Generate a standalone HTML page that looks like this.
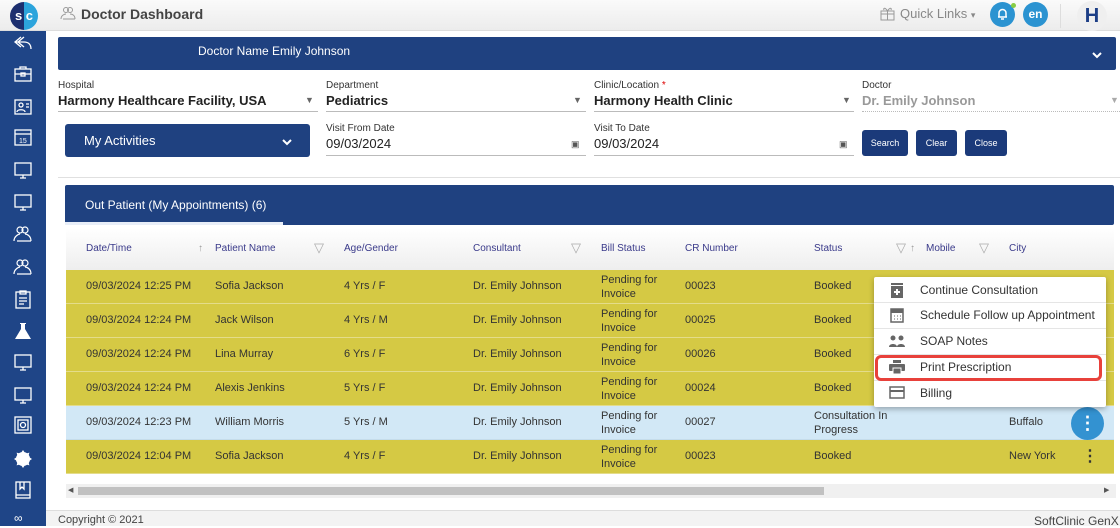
<!DOCTYPE html>
<html><head><meta charset="utf-8"><style>
*{box-sizing:border-box;margin:0;padding:0}
body{width:1120px;height:526px;overflow:hidden;font-family:"Liberation Sans",sans-serif;background:#fff;position:relative;color:#222}
.abs{position:absolute}
.top{left:0;top:0;width:1120px;height:31px;background:linear-gradient(#fafafa,#ececec);border-bottom:1px solid #ddd}
.side{left:0;top:31px;width:46px;height:495px;background:#1f4587}
.side svg{position:absolute;left:13px}
.lbl{font-size:10px;color:#333}
.val{font-size:13px;font-weight:bold;color:#222}
.btn{background:#1b3a7a;color:#fff;font-size:9px;border-radius:3px;text-align:center;line-height:26px;height:26px}
.th{font-size:10px;color:#3a3a8a}
.row{left:66px;width:1048px;height:34px;background:#d5c944;border-bottom:1px solid #e4dc8a}
.c{position:absolute;font-size:11px;color:#333}
.menu{left:874px;top:277px;width:232px;height:130px;background:#fff;box-shadow:0 2px 6px rgba(0,0,0,.3);border-radius:2px}
.mi{position:absolute;left:46px;font-size:12px;color:#333}
.ml{position:absolute;left:0;width:232px;height:1px;background:#e5e5e5}
</style></head><body>
<div class="abs top"></div>
<div class="abs" style="left:10px;top:2px;width:28px;height:28px;border-radius:50%;background:linear-gradient(90deg,#1d2f6f 50%,#2ca4dc 50%);color:#fff;font-weight:bold;font-size:13px;line-height:28px;text-align:center">s c</div>
<svg class="abs" style="left:60px;top:6px" width="16" height="14" viewBox="0 0 16 14" fill="none" stroke="#999" stroke-width="1"><circle cx="6" cy="4" r="2.5"/><circle cx="10" cy="4" r="2.5"/><path d="M1 13c0-4 4-5 5-5M15 13c0-4-3-5-5-5M3 13h12"/></svg>
<div class="abs" style="left:81px;top:6px;font-size:14px;font-weight:bold;color:#444">Doctor Dashboard</div>
<svg class="abs" style="left:880px;top:6px" width="15" height="15" viewBox="0 0 15 15" fill="none" stroke="#999" stroke-width="1"><rect x="1" y="5" width="13" height="9"/><path d="M1 8h13M7.5 5v9M7.5 5C5 1 3 2 4 4M7.5 5C10 1 12 2 11 4"/></svg>
<div class="abs" style="left:900px;top:6px;font-size:13px;color:#888">Quick Links <span style="font-size:9px">▾</span></div>
<div class="abs" style="left:990px;top:2px;width:25px;height:25px;border-radius:50%;background:#2b93d1"></div>
<svg class="abs" style="left:996px;top:7px" width="13" height="14" viewBox="0 0 13 14" fill="none" stroke="#fff" stroke-width="1.5"><path d="M2 10h9M3 10V6a3.5 3.5 0 017 0v4M5 12h3"/></svg>
<div class="abs" style="left:1011px;top:3px;width:5px;height:5px;border-radius:50%;background:#8c4"></div>
<div class="abs" style="left:1023px;top:2px;width:25px;height:25px;border-radius:50%;background:#2b93d1;color:#fff;text-align:center;line-height:25px;font-size:12px;font-weight:bold">en</div>
<div class="abs" style="left:1060px;top:4px;width:1px;height:24px;background:#ddd"></div>
<div class="abs" style="left:1077px;top:1px;width:30px;height:30px;border-radius:50%;background:#efefef;color:#1c3e86;text-align:center;line-height:30px;font-size:20px;font-weight:bold">H</div>
<div class="abs side">
<svg style="top:4px" width="20" height="16" viewBox="0 0 20 16" fill="none" stroke="#fff" stroke-width="1.3"><path d="M8 2L2 7l6 5M2 7h9c4 0 7 2 7 7"/><path d="M11 2L5 7l6 5"/></svg>
<svg style="top:35px" width="20" height="16" viewBox="0 0 20 16" fill="none" stroke="#fff" stroke-width="1.3"><rect x="2" y="3" width="16" height="12"/><path d="M7 3V1h6v2M2 8h16"/><rect x="8" y="7" width="4" height="3"/></svg>
<svg style="top:66px" width="20" height="18" viewBox="0 0 20 18" fill="none" stroke="#fff" stroke-width="1.3"><rect x="2" y="3" width="16" height="14"/><circle cx="8" cy="8" r="2"/><path d="M4 15c0-3 8-3 8 0M13 7h3M13 10h3"/></svg>
<svg style="top:97px" width="20" height="18" viewBox="0 0 20 18" fill="none" stroke="#fff" stroke-width="1.3"><rect x="2" y="2" width="16" height="15"/><path d="M2 6h16"/><text x="6" y="15" font-size="7" fill="#fff" stroke="none">15</text></svg>
<svg style="top:130px" width="20" height="18" viewBox="0 0 20 18" fill="none" stroke="#fff" stroke-width="1.3"><rect x="2" y="2" width="16" height="12"/><path d="M10 14v3M7 17h6"/></svg>
<svg style="top:162px" width="20" height="18" viewBox="0 0 20 18" fill="none" stroke="#fff" stroke-width="1.3"><rect x="2" y="2" width="16" height="12"/><path d="M10 14v3M7 17h6"/></svg>
<svg style="top:194px" width="20" height="18" viewBox="0 0 20 18" fill="none" stroke="#fff" stroke-width="1.2"><circle cx="7" cy="5" r="3"/><circle cx="12" cy="5" r="3"/><path d="M1 16c0-5 5-7 6-7M18 16c0-5-4-7-6-7M4 16h14"/></svg>
<svg style="top:227px" width="20" height="18" viewBox="0 0 20 18" fill="none" stroke="#fff" stroke-width="1.2"><circle cx="7" cy="5" r="3"/><circle cx="12" cy="5" r="3"/><path d="M1 16c0-5 5-7 6-7M18 16c0-5-4-7-6-7M4 16h14"/></svg>
<svg style="top:258px" width="20" height="20" viewBox="0 0 20 20" fill="none" stroke="#fff" stroke-width="1.3"><rect x="3" y="3" width="14" height="16"/><path d="M7 2h6v3H7zM6 9h8M6 12h8M6 15h5"/></svg>
<svg style="top:290px" width="20" height="20" viewBox="0 0 20 20" fill="#fff"><path d="M7 2h6v1h-1v5l6 10H2L8 8V3H7z"/></svg>
<svg style="top:322px" width="20" height="18" viewBox="0 0 20 18" fill="none" stroke="#fff" stroke-width="1.3"><rect x="2" y="2" width="16" height="12"/><path d="M10 14v3M7 17h6"/></svg>
<svg style="top:355px" width="20" height="18" viewBox="0 0 20 18" fill="none" stroke="#fff" stroke-width="1.3"><rect x="2" y="2" width="16" height="12"/><path d="M10 14v3M7 17h6"/></svg>
<svg style="top:385px" width="20" height="18" viewBox="0 0 20 18" fill="none" stroke="#fff" stroke-width="1.3"><rect x="2" y="1" width="16" height="16"/><rect x="5" y="4" width="10" height="10"/><circle cx="10" cy="9" r="2.5"/></svg>
<svg style="top:418px" width="20" height="20" viewBox="0 0 20 20" fill="#fff"><circle cx="10" cy="10" r="7"/><path d="M10 1l2 3h-4zM10 19l2-3h-4zM1 10l3 2v-4zM19 10l-3 2v-4zM3.6 3.6l3.5 1-2.5 2.5zM16.4 16.4l-3.5-1 2.5-2.5zM16.4 3.6l-1 3.5-2.5-2.5zM3.6 16.4l1-3.5 2.5 2.5z"/></svg>
<svg style="top:450px" width="20" height="18" viewBox="0 0 20 18" fill="none" stroke="#fff" stroke-width="1.3"><rect x="3" y="1" width="14" height="16"/><path d="M3 14h14M7 1v7l2-2 2 2V1"/></svg>
<div class="abs" style="left:14px;top:480px;color:#fff;font-size:12px">∞</div>
</div>
<div class="abs" style="left:58px;top:37px;width:1058px;height:33px;background:#1f4180;border-radius:2px"></div>
<div class="abs" style="left:198px;top:44px;color:#fff;font-size:12px">Doctor Name Emily Johnson</div>
<svg class="abs" style="left:1092px;top:52px" width="10" height="7" viewBox="0 0 10 7" fill="none" stroke="#fff" stroke-width="2"><path d="M1 1l4 4 4-4"/></svg>

<div class="abs lbl" style="left:58px;top:80px">Hospital</div>
<div class="abs val" style="left:58px;top:93px">Harmony Healthcare Facility, USA</div>
<div class="abs" style="left:305px;top:95px;font-size:9px;color:#666">▼</div>
<div class="abs" style="left:58px;top:111px;width:260px;height:1px;background:#bbb"></div>
<div class="abs lbl" style="left:326px;top:80px">Department</div>
<div class="abs val" style="left:326px;top:93px">Pediatrics</div>
<div class="abs" style="left:573px;top:95px;font-size:9px;color:#666">▼</div>
<div class="abs" style="left:326px;top:111px;width:260px;height:1px;background:#bbb"></div>
<div class="abs lbl" style="left:594px;top:80px">Clinic/Location <span style="color:#d00">*</span></div>
<div class="abs val" style="left:594px;top:93px">Harmony Health Clinic</div>
<div class="abs" style="left:842px;top:95px;font-size:9px;color:#666">▼</div>
<div class="abs" style="left:594px;top:111px;width:260px;height:1px;background:#bbb"></div>
<div class="abs lbl" style="left:862px;top:80px">Doctor</div>
<div class="abs val" style="left:862px;top:93px;color:#999">Dr. Emily Johnson</div>
<div class="abs" style="left:1110px;top:95px;font-size:9px;color:#aaa">▼</div>
<div class="abs" style="left:862px;top:111px;width:258px;border-top:1px dotted #bbb"></div>

<div class="abs" style="left:65px;top:124px;width:245px;height:33px;background:#1f4180;border-radius:3px"></div>
<div class="abs" style="left:84px;top:133px;color:#fff;font-size:13px">My Activities</div>
<svg class="abs" style="left:282px;top:139px" width="10" height="7" viewBox="0 0 10 7" fill="none" stroke="#fff" stroke-width="2"><path d="M1 1l4 4 4-4"/></svg>
<div class="abs lbl" style="left:326px;top:123px">Visit From Date</div>
<div class="abs" style="left:326px;top:136px;font-size:13px;color:#222">09/03/2024</div>
<div class="abs" style="left:571px;top:139px;font-size:9px;color:#555">▣</div>
<div class="abs" style="left:326px;top:155px;width:260px;height:1px;background:#bbb"></div>
<div class="abs lbl" style="left:594px;top:123px">Visit To Date</div>
<div class="abs" style="left:594px;top:136px;font-size:13px;color:#222">09/03/2024</div>
<div class="abs" style="left:839px;top:139px;font-size:9px;color:#555">▣</div>
<div class="abs" style="left:594px;top:155px;width:260px;height:1px;background:#bbb"></div>
<div class="abs btn" style="left:862px;top:130px;width:46px">Search</div>
<div class="abs btn" style="left:916px;top:130px;width:41px">Clear</div>
<div class="abs btn" style="left:965px;top:130px;width:42px">Close</div>
<div class="abs" style="left:58px;top:177px;width:1062px;height:1px;background:#e0e0e0"></div>

<div class="abs" style="left:65px;top:185px;width:1049px;height:40px;background:#1f4180;border-radius:2px"></div>
<div class="abs" style="left:85px;top:198px;color:#fff;font-size:12px">Out Patient (My Appointments) (6)</div>
<div class="abs" style="left:65px;top:222px;width:218px;height:3px;background:#e8eef8"></div>
<div class="abs" style="left:66px;top:228px;width:1048px;height:42px;background:linear-gradient(#fff,#eee)"></div>
<div class="abs th" style="left:86px;top:243px">Date/Time</div>
<div class="abs th" style="left:198px;top:243px;color:#999">↑</div>
<div class="abs th" style="left:215px;top:243px">Patient Name</div>
<div class="abs th" style="left:314px;top:240px;color:#aaa;font-size:13px">▽</div>
<div class="abs th" style="left:344px;top:243px">Age/Gender</div>
<div class="abs th" style="left:473px;top:243px">Consultant</div>
<div class="abs th" style="left:571px;top:240px;color:#aaa;font-size:13px">▽</div>
<div class="abs th" style="left:601px;top:243px">Bill Status</div>
<div class="abs th" style="left:685px;top:243px">CR Number</div>
<div class="abs th" style="left:814px;top:243px">Status</div>
<div class="abs th" style="left:896px;top:240px;color:#aaa;font-size:13px">▽</div>
<div class="abs th" style="left:910px;top:243px;color:#999">↑</div>
<div class="abs th" style="left:926px;top:243px">Mobile</div>
<div class="abs th" style="left:979px;top:240px;color:#aaa;font-size:13px">▽</div>
<div class="abs th" style="left:1009px;top:243px">City</div>

<div class="abs row" style="top:270px"><span class="c" style="left:20px;top:10px">09/03/2024 12:25 PM</span><span class="c" style="left:149px;top:10px">Sofia Jackson</span><span class="c" style="left:278px;top:10px">4 Yrs / F</span><span class="c" style="left:407px;top:10px">Dr. Emily Johnson</span><span class="c" style="left:535px;top:3px;line-height:14px">Pending for<br>Invoice</span><span class="c" style="left:619px;top:10px">00023</span><span class="c" style="left:748px;top:10px">Booked</span></div>
<div class="abs row" style="top:304px"><span class="c" style="left:20px;top:10px">09/03/2024 12:24 PM</span><span class="c" style="left:149px;top:10px">Jack Wilson</span><span class="c" style="left:278px;top:10px">4 Yrs / M</span><span class="c" style="left:407px;top:10px">Dr. Emily Johnson</span><span class="c" style="left:535px;top:3px;line-height:14px">Pending for<br>Invoice</span><span class="c" style="left:619px;top:10px">00025</span><span class="c" style="left:748px;top:10px">Booked</span></div>
<div class="abs row" style="top:338px"><span class="c" style="left:20px;top:10px">09/03/2024 12:24 PM</span><span class="c" style="left:149px;top:10px">Lina Murray</span><span class="c" style="left:278px;top:10px">6 Yrs / F</span><span class="c" style="left:407px;top:10px">Dr. Emily Johnson</span><span class="c" style="left:535px;top:3px;line-height:14px">Pending for<br>Invoice</span><span class="c" style="left:619px;top:10px">00026</span><span class="c" style="left:748px;top:10px">Booked</span></div>
<div class="abs row" style="top:372px"><span class="c" style="left:20px;top:10px">09/03/2024 12:24 PM</span><span class="c" style="left:149px;top:10px">Alexis Jenkins</span><span class="c" style="left:278px;top:10px">5 Yrs / F</span><span class="c" style="left:407px;top:10px">Dr. Emily Johnson</span><span class="c" style="left:535px;top:3px;line-height:14px">Pending for<br>Invoice</span><span class="c" style="left:619px;top:10px">00024</span><span class="c" style="left:748px;top:10px">Booked</span></div>
<div class="abs row" style="top:406px;background:#d2e8f6;border-color:#c5dcea"><span class="c" style="left:20px;top:10px">09/03/2024 12:23 PM</span><span class="c" style="left:149px;top:10px">William Morris</span><span class="c" style="left:278px;top:10px">5 Yrs / M</span><span class="c" style="left:407px;top:10px">Dr. Emily Johnson</span><span class="c" style="left:535px;top:3px;line-height:14px">Pending for<br>Invoice</span><span class="c" style="left:619px;top:10px">00027</span><span class="c" style="left:748px;top:3px;line-height:14px">Consultation In<br>Progress</span><span class="c" style="left:943px;top:10px">Buffalo</span></div>
<div class="abs row" style="top:440px"><span class="c" style="left:20px;top:10px">09/03/2024 12:04 PM</span><span class="c" style="left:149px;top:10px">Sofia Jackson</span><span class="c" style="left:278px;top:10px">4 Yrs / F</span><span class="c" style="left:407px;top:10px">Dr. Emily Johnson</span><span class="c" style="left:535px;top:3px;line-height:14px">Pending for<br>Invoice</span><span class="c" style="left:619px;top:10px">00023</span><span class="c" style="left:748px;top:10px">Booked</span><span class="c" style="left:943px;top:10px">New York</span><span class="c" style="left:1016px;top:6px;font-size:16px;font-weight:bold;line-height:22px">⋮</span></div>
<div class="abs" style="left:1071px;top:407px;width:33px;height:33px;border-radius:50%;background:#3392d1;color:#fff;text-align:center;line-height:33px;font-size:18px;font-weight:bold">⋮</div>

<div class="abs" style="left:66px;top:484px;width:1050px;height:14px;background:#f0f0f0"></div>
<div class="abs" style="left:78px;top:487px;width:746px;height:8px;background:#c1c1c1"></div>
<div class="abs" style="left:68px;top:486px;font-size:7px;color:#555">◀</div>
<div class="abs" style="left:1104px;top:486px;font-size:7px;color:#555">▶</div>
<div class="abs" style="left:46px;top:510px;width:1074px;height:16px;background:#f3f3f3;border-top:1px solid #ddd"></div>
<div class="abs" style="left:58px;top:514px;font-size:11px;color:#444">Copyright © 2021</div>
<div class="abs" style="left:1034px;top:514px;font-size:12px;color:#444">SoftClinic GenX</div>

<div class="abs menu">
<div class="ml" style="top:25px"></div><div class="ml" style="top:51px"></div><div class="ml" style="top:77px"></div><div class="ml" style="top:103px"></div>
<svg class="abs" style="left:16px;top:6px" width="14" height="15" viewBox="0 0 14 15"><rect x="1" y="0" width="12" height="2" fill="#666"/><rect x="1" y="3" width="12" height="12" fill="#666"/><path d="M7 6v6M4 9h6" stroke="#fff" stroke-width="2"/></svg>
<span class="mi" style="top:6px">Continue Consultation</span>
<svg class="abs" style="left:16px;top:31px" width="14" height="15" viewBox="0 0 14 15"><rect x="1" y="1" width="12" height="13" fill="none" stroke="#666" stroke-width="1.5"/><rect x="1" y="1" width="12" height="4" fill="#666"/><path d="M4 8h1M7 8h1M10 8h1M4 11h1M7 11h1M10 11h1" stroke="#666"/></svg>
<span class="mi" style="top:31px">Schedule Follow up Appointment</span>
<svg class="abs" style="left:15px;top:58px" width="16" height="12" viewBox="0 0 16 12" fill="#666"><circle cx="4" cy="3" r="2.5"/><circle cx="12" cy="3" r="2.5"/><path d="M0 12c0-4 8-4 8 0zM8 12c0-4 8-4 8 0z"/></svg>
<span class="mi" style="top:57px">SOAP Notes</span>
<svg class="abs" style="left:15px;top:83px" width="16" height="14" viewBox="0 0 16 14" fill="#666"><rect x="4" y="0" width="8" height="3"/><rect x="0" y="4" width="16" height="7" rx="1"/><rect x="4" y="8" width="8" height="6" fill="#666" stroke="#fff"/></svg>
<span class="mi" style="top:83px">Print Prescription</span>
<svg class="abs" style="left:15px;top:109px" width="16" height="13" viewBox="0 0 16 13"><rect x="1" y="1" width="14" height="11" fill="none" stroke="#666" stroke-width="1.5"/><rect x="1" y="4" width="14" height="2" fill="#666"/></svg>
<span class="mi" style="top:109px">Billing</span>
</div>
<div class="abs" style="left:875px;top:355px;width:227px;height:26px;border:3px solid #e8413b;border-radius:6px"></div>
</body></html>
